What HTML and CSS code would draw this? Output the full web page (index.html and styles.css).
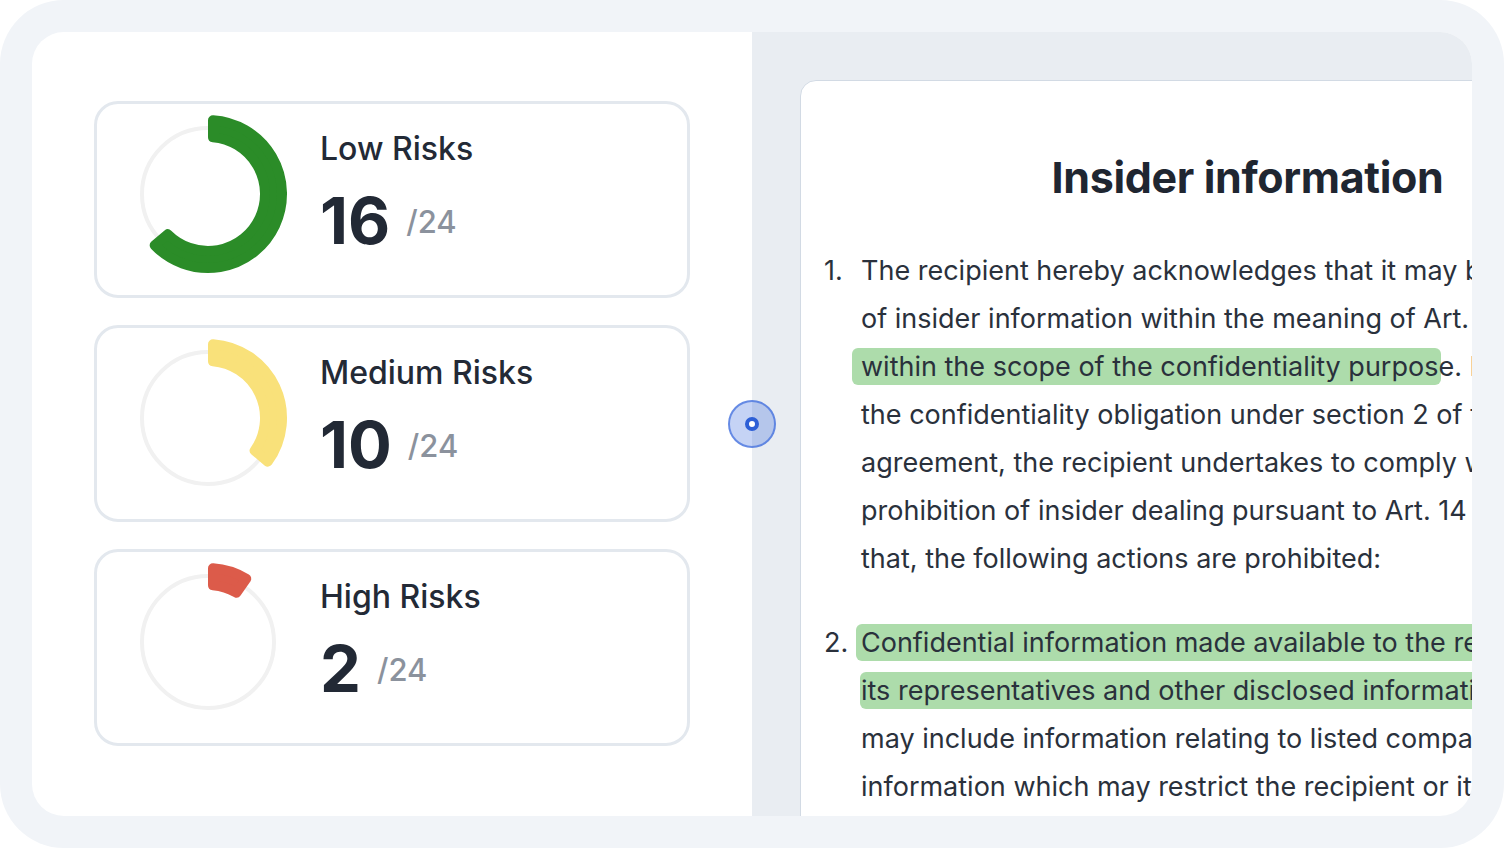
FILE: index.html
```html
<!DOCTYPE html>
<html lang="en">
<head>
<meta charset="utf-8">
<title>Risk overview</title>
<link rel="stylesheet" href="styles.css">
</head>
<body>
<div class="frame">
  <div class="inner">
    <section class="left">
      <div class="card">
        <svg class="donut" viewBox="0 0 176 176" width="176" height="176">
          <circle class="track" cx="88" cy="88" r="66"/>
          <path class="arc arc-low" d="M 92.99 14.17 A 74 74 0 1 1 34.64 139.27 L 47.72 128.33 A 57 57 0 1 0 93.0 31.22 Z"/>
        </svg>
        <div class="info">
          <div class="label">Low Risks</div>
          <div class="count"><span class="num">16</span><span class="total">/24</span></div>
        </div>
      </div>
      <div class="card">
        <svg class="donut" viewBox="0 0 176 176" width="176" height="176">
          <circle class="track" cx="88" cy="88" r="66"/>
          <path class="arc arc-med" d="M 92.99 14.17 A 74 74 0 0 1 147.77 131.63 L 134.71 120.67 A 57 57 0 0 0 93.0 31.22 Z"/>
        </svg>
        <div class="info">
          <div class="label">Medium Risks</div>
          <div class="count"><span class="num">10</span><span class="total">/24</span></div>
        </div>
      </div>
      <div class="card">
        <svg class="donut" viewBox="0 0 176 176" width="176" height="176">
          <circle class="track" cx="88" cy="88" r="66"/>
          <path class="arc arc-high" d="M 92.99 14.17 A 74 74 0 0 1 126.26 24.66 L 116.47 38.62 A 57 57 0 0 0 93.0 31.22 Z"/>
        </svg>
        <div class="info">
          <div class="label">High Risks</div>
          <div class="count"><span class="num">2</span><span class="total">/24</span></div>
        </div>
      </div>
    </section>
    <section class="right">
      <article class="doc">
        <h1 class="doc-title">Insider information</h1>
        <div class="item">
          <div class="marker">1.</div>
          <div class="lines">
            <div class="line">The recipient hereby acknowledges that it may be in possession</div>
            <div class="line">of insider information within the meaning of Art. 7 MAR</div>
            <div class="line"><span class="hl hl-a">within the scope of the confidentiality purpos</span>e. In addition to</div>
            <div class="line">the confidentiality obligation under section 2 of this</div>
            <div class="line">agreement, the recipient undertakes to comply with the</div>
            <div class="line">prohibition of insider dealing pursuant to Art. 14 MAR. In</div>
            <div class="line">that, the following actions are prohibited:</div>
          </div>
        </div>
        <div class="item item-gap">
          <div class="marker">2.</div>
          <div class="lines">
            <div class="line"><span class="hl hl-b">Confidential information made available to the recipient by the company</span></div>
            <div class="line"><span class="hl hl-c">its representatives and other disclosed information about the company</span></div>
            <div class="line">may include information relating to listed companies</div>
            <div class="line">information which may restrict the recipient or its</div>
          </div>
        </div>
      </article>
    </section>
    <div class="handle"><span class="handle-dot"></span></div>
  </div>
</div>
</body>
</html>
```

FILE: styles.css
```css
* { box-sizing: border-box; }

html, body {
  margin: 0;
  padding: 0;
  background: #ffffff;
}

body {
  font-family: Inter, "Noto Sans", "Liberation Sans", sans-serif;
  color: #232a36;
}

.frame {
  width: 1504px;
  height: 848px;
  padding: 32px;
  border-radius: 64px;
  background: #f1f4f8;
}

.inner {
  position: relative;
  display: flex;
  height: 784px;
  border-radius: 32px;
  overflow: hidden;
  background: #ffffff;
}

.left {
  width: 720px;
  flex: none;
  padding: 69px 0 0 62px;
  display: flex;
  flex-direction: column;
  gap: 27px;
}

.card {
  width: 596px;
  height: 197px;
  border: 3px solid #e3e8ee;
  border-radius: 24px;
  display: flex;
  align-items: flex-start;
  padding: 2px 0 0 23px;
  background: #ffffff;
}

.donut {
  flex: none;
  display: block;
}

.track {
  fill: none;
  stroke: #f1f1f1;
  stroke-width: 4;
}

.arc {
  stroke-width: 10;
  stroke-linejoin: round;
}

.arc-low { fill: #2b8c28; stroke: #2b8c28; }
.arc-med { fill: #f9e17a; stroke: #f9e17a; }
.arc-high { fill: #dc5b4a; stroke: #dc5b4a; }

.info {
  margin: 23px 0 0 24px;
  display: flex;
  flex-direction: column;
  gap: 20px;
}

.label {
  font-size: 32px;
  line-height: 40px;
  font-weight: 500;
  color: #232a36;
}

.count {
  display: flex;
  align-items: center;
  gap: 16px;
  height: 64px;
}

.num {
  font-size: 65px;
  line-height: 64px;
  font-weight: 700;
  color: #222935;
}

.total {
  font-size: 31px;
  line-height: 40px;
  font-weight: 500;
  color: #8b929d;
  margin-top: 2px;
}

.right {
  flex: 1;
  background: #e9edf2;
  padding: 48px 0 0 48px;
  overflow: hidden;
}

.doc {
  width: 896px;
  height: 900px;
  background: #ffffff;
  border: 1px solid #d2dae4;
  border-radius: 16px;
  padding: 68px 24px 0 23px;
}

.doc-title {
  margin: 0 0 42px 0;
  text-align: center;
  font-size: 43px;
  line-height: 56px;
  font-weight: 700;
  color: #1f2631;
  letter-spacing: -0.35px;
}

.item {
  display: flex;
  font-size: 27px;
  line-height: 48px;
  color: #2a313c;
}

.item-gap {
  margin-top: 36px;
}

.marker {
  width: 37px;
  flex: none;
}

.lines {
  white-space: nowrap;
}

.hl {
  background: #addcab;
  border-radius: 6px;
  padding: 2px 0;
}

.hl-a {
  padding-left: 9px;
  margin-left: -9px;
  padding-right: 3px;
  margin-right: -3px;
}

.hl-b {
  padding-left: 5px;
  margin-left: -5px;
}

.hl-c {
  padding-left: 1px;
  margin-left: -1px;
}

.handle {
  position: absolute;
  left: 696px;
  top: 368px;
  width: 48px;
  height: 48px;
  border-radius: 50%;
  background: rgba(41, 93, 218, 0.27);
  border: 2px solid rgba(50, 100, 220, 0.65);
  display: flex;
  align-items: center;
  justify-content: center;
}

.handle-dot {
  width: 14px;
  height: 14px;
  border-radius: 50%;
  border: 4px solid #2d5fd6;
  background: #ffffff;
}
```
